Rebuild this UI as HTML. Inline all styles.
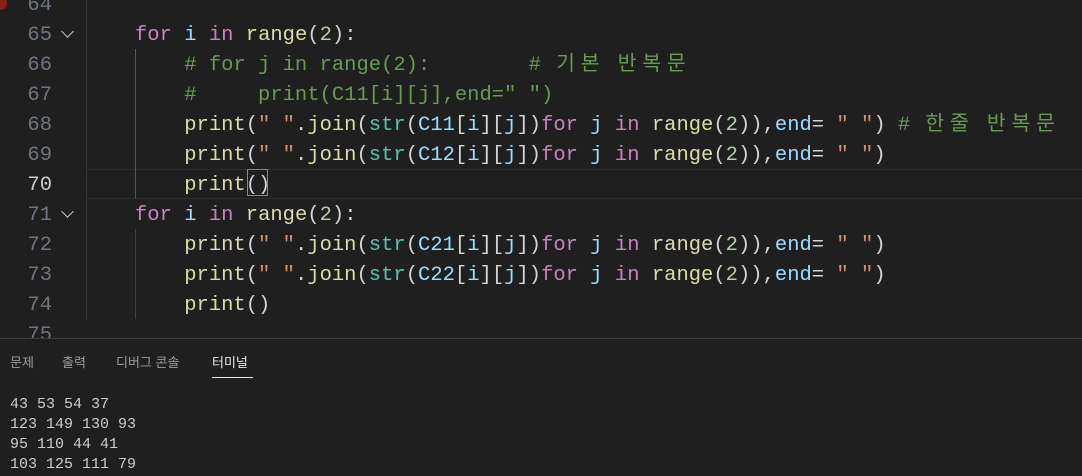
<!DOCTYPE html>
<html><head><meta charset="utf-8"><style>
body{margin:0;width:1082px;height:475px;background:#1f1f1f;overflow:hidden;position:relative;font-family:"Liberation Mono","Noto Sans CJK KR",monospace;}
.ln{position:absolute;left:0;width:52px;text-align:right;color:#6e7681;font-size:20.5px;line-height:30px;}
.cl{position:absolute;left:135px;font-size:20.5px;line-height:30px;color:#d4d4d4;white-space:pre;}
.k{color:#c586c0}.v{color:#9cdcfe}.f{color:#dcdcaa}.t{color:#4ec9b0}.n{color:#b5cea8}.c{color:#6a9955}.s{color:#ce9178}
.h{display:inline-block;width:24.6px;text-align:center}
.fold{position:absolute;left:63px;width:8px;height:8px;border-right:1.5px solid #c5c5c5;border-bottom:1.5px solid #c5c5c5;transform:rotate(45deg);}
.tabs{position:absolute;top:352px;font-family:"Liberation Sans","Noto Sans CJK KR",sans-serif;font-size:13px;color:#9d9d9d;}
.term{position:absolute;left:10px;top:395px;font-size:15px;line-height:20px;color:#cccccc;white-space:pre;}
</style></head><body>
<div style="position:absolute;left:0;top:-4px;width:7px;height:14px;border-radius:0 7px 7px 0;background:#8b1e1e"></div>
<div style="position:absolute;left:86px;top:0;width:1px;height:320px;background:#333"></div>
<div style="position:absolute;left:86px;top:169px;width:996px;height:28px;border-top:1px solid #2c2c2c;border-bottom:1px solid #2c2c2c"></div>
<div style="position:absolute;left:135px;top:49px;width:1px;height:150px;background:#585858"></div>
<div style="position:absolute;left:135px;top:229px;width:1px;height:90px;background:#404040"></div>
<div style="position:absolute;left:247px;top:169px;width:21px;height:27px;border:1px solid #888;box-sizing:border-box"></div>

<div class="ln" style="top:-9px">64</div>
<div class="ln" style="top:21px">65</div><div class="fold" style="top:27px"></div>
<div class="ln" style="top:51px">66</div>
<div class="ln" style="top:81px">67</div>
<div class="ln" style="top:111px">68</div>
<div class="ln" style="top:141px">69</div>
<div class="ln" style="top:171px;color:#cccccc">70</div>
<div class="ln" style="top:201px">71</div><div class="fold" style="top:207px"></div>
<div class="ln" style="top:231px">72</div>
<div class="ln" style="top:261px">73</div>
<div class="ln" style="top:291px">74</div>
<div class="ln" style="top:321px">75</div>

<div class="cl" style="top:21px"><span class="k">for</span> <span class="v">i</span> <span class="k">in</span> <span class="f">range</span>(<span class="n">2</span>):</div>
<div class="cl" style="top:51px">    <span class="c"># for j in range(2):        # <span class="h">기</span><span class="h">본</span> <span class="h">반</span><span class="h">복</span><span class="h">문</span></span></div>
<div class="cl" style="top:81px">    <span class="c">#     print(C11[i][j],end=" ")</span></div>
<div class="cl" style="top:111px">    <span class="f">print</span>(<span class="s">" "</span>.<span class="f">join</span>(<span class="t">str</span>(<span class="v">C11</span>[<span class="v">i</span>][<span class="v">j</span>])<span class="k">for</span> <span class="v">j</span> <span class="k">in</span> <span class="f">range</span>(<span class="n">2</span>)),<span class="v">end</span>= <span class="s">" "</span>) <span class="c"># <span class="h">한</span><span class="h">줄</span> <span class="h">반</span><span class="h">복</span><span class="h">문</span></span></div>
<div class="cl" style="top:141px">    <span class="f">print</span>(<span class="s">" "</span>.<span class="f">join</span>(<span class="t">str</span>(<span class="v">C12</span>[<span class="v">i</span>][<span class="v">j</span>])<span class="k">for</span> <span class="v">j</span> <span class="k">in</span> <span class="f">range</span>(<span class="n">2</span>)),<span class="v">end</span>= <span class="s">" "</span>)</div>
<div class="cl" style="top:171px">    <span class="f">print</span>()</div>
<div class="cl" style="top:201px"><span class="k">for</span> <span class="v">i</span> <span class="k">in</span> <span class="f">range</span>(<span class="n">2</span>):</div>
<div class="cl" style="top:231px">    <span class="f">print</span>(<span class="s">" "</span>.<span class="f">join</span>(<span class="t">str</span>(<span class="v">C21</span>[<span class="v">i</span>][<span class="v">j</span>])<span class="k">for</span> <span class="v">j</span> <span class="k">in</span> <span class="f">range</span>(<span class="n">2</span>)),<span class="v">end</span>= <span class="s">" "</span>)</div>
<div class="cl" style="top:261px">    <span class="f">print</span>(<span class="s">" "</span>.<span class="f">join</span>(<span class="t">str</span>(<span class="v">C22</span>[<span class="v">i</span>][<span class="v">j</span>])<span class="k">for</span> <span class="v">j</span> <span class="k">in</span> <span class="f">range</span>(<span class="n">2</span>)),<span class="v">end</span>= <span class="s">" "</span>)</div>
<div class="cl" style="top:291px">    <span class="f">print</span>()</div>

<div style="position:absolute;left:0;top:338px;width:1082px;height:137px;background:#1f1f1f;border-top:1px solid #3c3c3c"></div>
<div class="tabs" style="left:10px">문제</div>
<div class="tabs" style="left:62px">출력</div>
<div class="tabs" style="left:116px">디버그 콘솔</div>
<div class="tabs" style="left:212px;color:#e7e7e7">터미널</div>
<div style="position:absolute;left:212px;top:377px;width:41px;height:1px;background:#e7e7e7"></div>
<div class="term">43 53 54 37
123 149 130 93
95 110 44 41
103 125 111 79</div>
</body></html>
